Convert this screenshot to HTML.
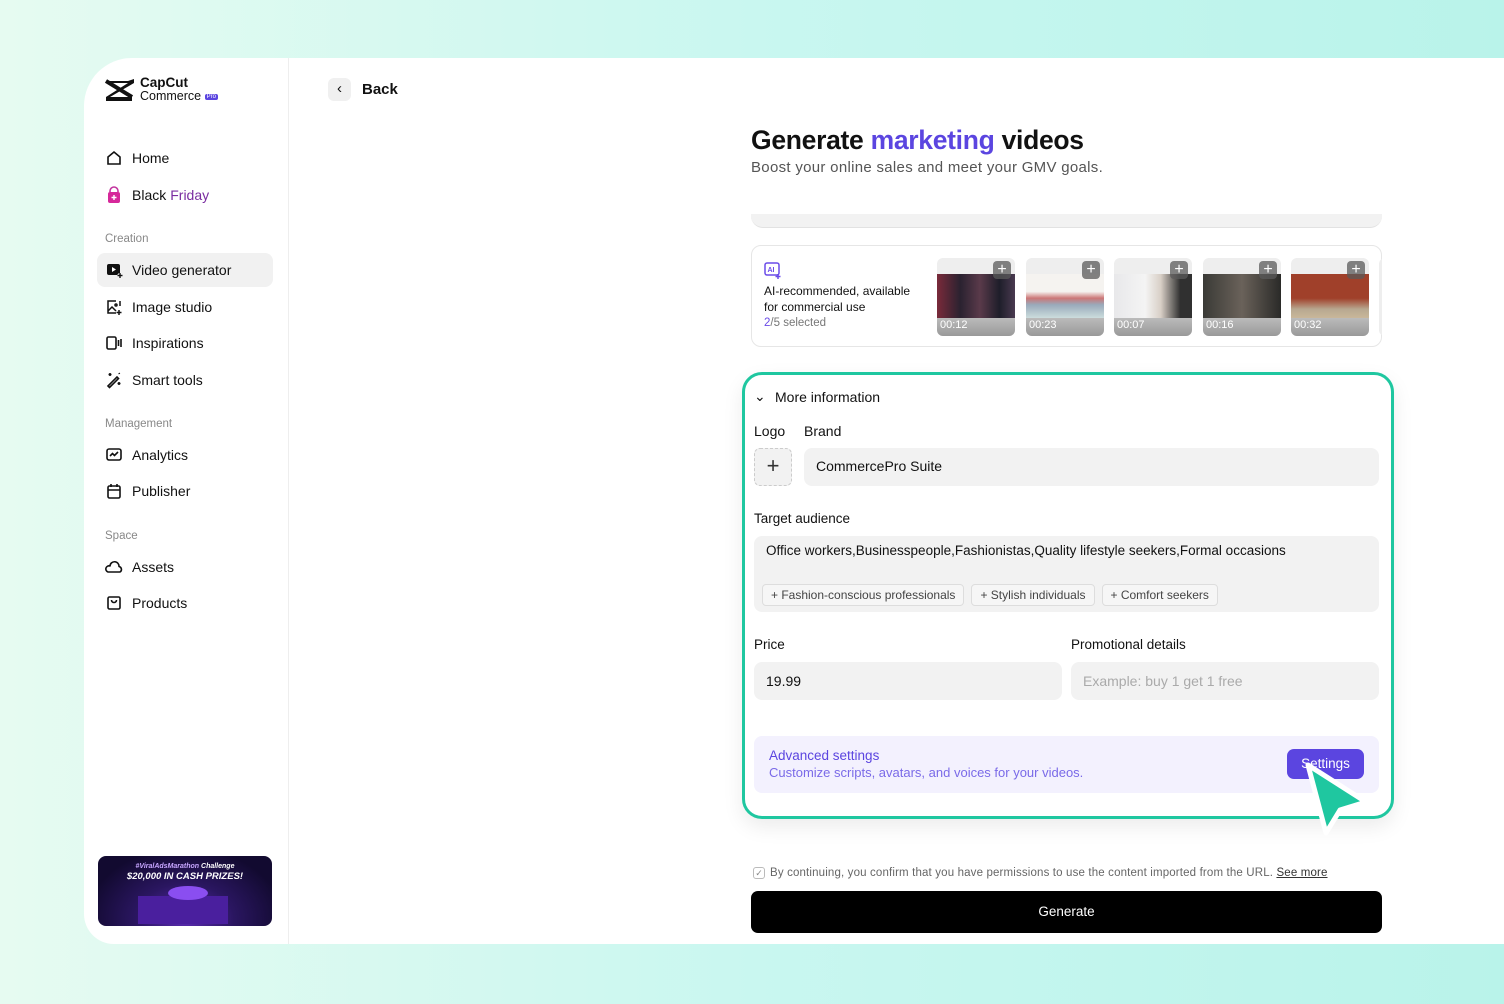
<!DOCTYPE html>
<html><head><meta charset="utf-8"><style>
*{box-sizing:border-box;margin:0;padding:0}
body{width:1504px;height:1004px;overflow:hidden;font-family:"Liberation Sans",sans-serif;background:linear-gradient(90deg,#e6fbf1 0%,#c9f7f0 50%,#b9f3ea 100%);position:relative;color:#111}
.a{position:absolute}
.card{left:84px;top:58px;width:1420px;height:886px;background:#fff;border-top-left-radius:48px;border-bottom-left-radius:30px;overflow:hidden}
.side{left:0;top:0;width:205px;height:886px;border-right:1px solid #eee}
.nav{position:absolute;left:21px;font-size:14px;color:#111;display:flex;align-items:center;gap:9px}
.nav svg{width:18px;height:18px}
.sec{position:absolute;left:21px;font-size:11.5px;color:#888}
.in{background:#f2f2f2;border-radius:8px;font-size:14px;color:#111}
.chip{display:inline-block;border:1px solid #ddd;border-radius:4px;background:#f6f6f6;font-size:12px;color:#444;padding:3px 8px;margin-right:7px}
.th{position:absolute;top:0;width:78px;height:78px;border-radius:6px;overflow:hidden;background:#eee}
.th .img{position:absolute;left:0;top:16px;width:78px;height:44px}
.th .bot{position:absolute;left:0;top:60px;width:78px;height:18px;background:linear-gradient(#bbb,#999);color:#fff;font-size:11px;padding:1px 3px}
.th .pl{position:absolute;right:4px;top:3px;width:18px;height:18px;border-radius:4px;background:rgba(90,90,90,.75);color:#fff;font-size:16px;line-height:17px;text-align:center}
</style></head><body>
<div class="a card">
 <div class="a side">
  <svg class="a" style="left:20px;top:20px" width="32" height="24" viewBox="0 0 32 24"><path d="M2 3h22l6-2v4L6 19h22v4H2v-4l22-14H2z" fill="#111"/><path d="M2 3l26 16" stroke="#111" stroke-width="4"/></svg>
  <div class="a" style="left:56px;top:18px;font-size:13.5px;font-weight:bold;line-height:14px">CapCut</div>
  <div class="a" style="left:56px;top:32px;font-size:12.5px;line-height:13px">Commerce <span style="background:#5b45e0;color:#fff;font-size:6px;padding:0 2px;border-radius:2px;vertical-align:2px">Pro</span></div>
  <div class="nav" style="top:91px"><svg viewBox="0 0 18 18" fill="none" stroke="#111" stroke-width="1.6"><path d="M3 8l6-5 6 5v7H3z"/></svg>Home</div>
  <div class="nav" style="top:128px"><svg viewBox="0 0 18 18"><path d="M5 6V5a4 4 0 018 0v1" stroke="#c2339e" stroke-width="1.6" fill="none"/><rect x="3" y="6" width="12" height="11" rx="2" fill="#d6289a"/><path d="M9 9v5M6.5 11.5h5" stroke="#fff" stroke-width="1.4"/></svg>Black <span style="color:#7a2ca0;margin-left:-5px">Friday</span></div>
  <div class="sec" style="top:175px">Creation</div>
  <div class="a" style="left:13px;top:195px;width:176px;height:34px;background:#f1f1f1;border-radius:8px"></div>
  <div class="nav" style="top:203px"><svg viewBox="0 0 18 18"><rect x="2" y="3" width="13" height="11" rx="2" fill="#111"/><path d="M7 6l4 2.5L7 11z" fill="#fff"/><path d="M15 12v5M12.5 14.5h5" stroke="#fff" stroke-width="3"/><path d="M15 12v5M12.5 14.5h5" stroke="#111" stroke-width="1.4"/></svg>Video generator</div>
  <div class="nav" style="top:240px"><svg viewBox="0 0 18 18" fill="none" stroke="#111" stroke-width="1.5"><path d="M11 3H3v12h8M15 3v5"/><path d="M3 13l4-4 4 4"/><circle cx="11" cy="7" r="1"/><path d="M14 12v5M11.5 14.5h5"/></svg>Image studio</div>
  <div class="nav" style="top:276px"><svg viewBox="0 0 18 18" fill="none" stroke="#111" stroke-width="1.6"><rect x="2" y="3" width="9" height="12" rx="1.5"/><path d="M13.5 6v6M16 5v8"/></svg>Inspirations</div>
  <div class="nav" style="top:313px"><svg viewBox="0 0 18 18" fill="none" stroke="#111" stroke-width="1.6"><path d="M3 15l9-9 1.5 1.5-9 9z"/><path d="M5 2v3M3.5 3.5h3M14 11v3M12.5 12.5h3M14 2l.5 1"/></svg>Smart tools</div>
  <div class="sec" style="top:360px">Management</div>
  <div class="nav" style="top:388px"><svg viewBox="0 0 18 18" fill="none" stroke="#111" stroke-width="1.6"><rect x="2" y="3" width="14" height="11" rx="2"/><path d="M5 10l2.5-2.5 2 2L13 6"/></svg>Analytics</div>
  <div class="nav" style="top:424px"><svg viewBox="0 0 18 18" fill="none" stroke="#111" stroke-width="1.6"><rect x="3" y="4" width="12" height="12" rx="1.5"/><path d="M3 8h12M6 2v3M12 2v3"/></svg>Publisher</div>
  <div class="sec" style="top:472px">Space</div>
  <div class="nav" style="top:500px"><svg viewBox="0 0 18 18" fill="none" stroke="#111" stroke-width="1.6"><path d="M3 14h12a3 3 0 00-1-5.5A4.5 4.5 0 005 8a3 3 0 00-2 6z" stroke-linejoin="round"/></svg>Assets</div>
  <div class="nav" style="top:536px"><svg viewBox="0 0 18 18" fill="none" stroke="#111" stroke-width="1.6"><rect x="3" y="3" width="12" height="12" rx="1.5"/><path d="M6.5 6a2.5 2.5 0 005 0"/></svg>Products</div>
  <div class="a" style="left:14px;top:798px;width:174px;height:70px;border-radius:8px;background:radial-gradient(ellipse at 50% 90%,#5b2bb3 0%,#2a1660 40%,#120a30 80%);color:#fff;text-align:center;overflow:hidden">
   <div style="font-size:7px;font-style:italic;font-weight:bold;margin-top:7px"><span style="color:#c7a6ff">#ViralAdsMarathon</span> Challenge</div>
   <div style="font-size:9.5px;font-style:italic;font-weight:bold;margin-top:1px">$20,000 IN CASH PRIZES!</div>
   <div style="position:absolute;left:40px;top:40px;width:90px;height:28px;background:#4a1f9e"></div>
   <div style="position:absolute;left:70px;top:30px;width:40px;height:14px;border-radius:50%;background:#8a4ef0"></div>
  </div>
 </div>
 <div class="a" style="left:244px;top:20px;width:23px;height:23px;background:#f0f0f0;border-radius:6px;text-align:center;font-size:15px;line-height:22px">&#8249;</div>
 <div class="a" style="left:278px;top:23px;font-size:15px;font-weight:bold">Back</div>
 <div class="a" style="left:667px;top:67px;font-size:26.5px;font-weight:bold;letter-spacing:-0.3px">Generate <span style="color:#5b45e0">marketing</span> videos</div>
 <div class="a" style="left:667px;top:101px;font-size:15px;color:#555;letter-spacing:0.3px">Boost your online sales and meet your GMV goals.</div>
 <div class="a" style="left:667px;top:156px;width:631px;height:14px;background:#f2f2f2;border-radius:0 0 12px 12px;border-bottom:1px solid #e2e2e2"></div>
 <div class="a" style="left:667px;top:187px;width:631px;height:102px;border:1px solid #e6e6e6;border-radius:10px">
  <svg class="a" style="left:12px;top:16px" width="18" height="18" viewBox="0 0 18 18" fill="none" stroke="#6a4be8" stroke-width="1.5"><rect x="1" y="1" width="14" height="12" rx="2"/><text x="3.5" y="10" font-size="7" fill="#6a4be8" stroke="none" font-family="Liberation Sans" font-weight="bold">AI</text><path d="M14 12v5M11.5 14.5h5"/></svg>
  <div class="a" style="left:12px;top:37px;font-size:12px;line-height:16px;width:158px">AI-recommended, available for commercial use</div>
  <div class="a" style="left:12px;top:71px;font-size:11.5px;color:#777"><span style="color:#6a4be8">2</span>/5 selected</div>
  <div class="a" style="left:185px;top:12px;width:445px;height:78px;overflow:hidden">
   <div class="th" style="left:0"><div class="img" style="background:linear-gradient(90deg,#7a2a3a,#2a2230 30%,#5a3a4a 55%,#1e1e2a 80%,#4a3a50)"></div><div class="bot">00:12</div><div class="pl">+</div></div>
   <div class="th" style="left:89px"><div class="img" style="background:linear-gradient(#f5f3f0 40%,#c77 55%,#9ab 70%,#cdd 100%)"></div><div class="bot">00:23</div><div class="pl">+</div></div>
   <div class="th" style="left:177px"><div class="img" style="background:linear-gradient(90deg,#e8e8ea,#f4f4f4 40%,#d8cfc6 60%,#303030 85%)"></div><div class="bot">00:07</div><div class="pl">+</div></div>
   <div class="th" style="left:266px"><div class="img" style="background:linear-gradient(90deg,#3a3a36,#6a625a 50%,#2a2a28)"></div><div class="bot">00:16</div><div class="pl">+</div></div>
   <div class="th" style="left:354px"><div class="img" style="background:linear-gradient(#a0402a 55%,#b8a890 80%,#c9b79a)"></div><div class="bot">00:32</div><div class="pl">+</div></div>
   <div class="th" style="left:442px"></div>
  </div>
 </div>
 <div class="a" style="left:658px;top:314px;width:652px;height:447px;border:3px solid #1fc7a0;border-radius:20px;background:#fff;box-shadow:0 8px 20px rgba(0,0,0,.08)">
  <div class="a" style="left:9px;top:13px;font-size:14px">&#8964;</div>
  <div class="a" style="left:30px;top:14px;font-size:14px">More information</div>
  <div class="a" style="left:9px;top:48px;font-size:14px">Logo</div>
  <div class="a" style="left:59px;top:48px;font-size:14px">Brand</div>
  <div class="a" style="left:9px;top:73px;width:38px;height:38px;border:1px dashed #ccc;border-radius:6px;background:#f2f2f2;text-align:center;font-size:22px;line-height:34px;color:#333">+</div>
  <div class="a in" style="left:59px;top:73px;width:575px;height:38px;padding:10px 12px">CommercePro Suite</div>
  <div class="a" style="left:9px;top:136px;font-size:13.5px">Target audience</div>
  <div class="a in" style="left:9px;top:161px;width:625px;height:76px;padding:7px 12px;font-size:13.5px">Office workers,Businesspeople,Fashionistas,Quality lifestyle seekers,Formal occasions
   <div style="position:absolute;left:8px;top:48px"><span class="chip">+ Fashion-conscious professionals</span><span class="chip">+ Stylish individuals</span><span class="chip">+ Comfort seekers</span></div></div>
  <div class="a" style="left:9px;top:262px;font-size:13.5px">Price</div>
  <div class="a" style="left:326px;top:262px;font-size:13.5px">Promotional details</div>
  <div class="a in" style="left:9px;top:287px;width:308px;height:38px;padding:11px 12px">19.99</div>
  <div class="a in" style="left:326px;top:287px;width:308px;height:38px;padding:11px 12px;color:#aaa">Example: buy 1 get 1 free</div>
  <div class="a" style="left:9px;top:361px;width:625px;height:57px;background:#f3f1fe;border-radius:8px">
   <div class="a" style="left:15px;top:12px;font-size:13.5px;color:#5b45e0">Advanced settings</div>
   <div class="a" style="left:15px;top:29px;font-size:13px;color:#7a6ae8">Customize scripts, avatars, and voices for your videos.</div>
   <div class="a" style="left:533px;top:13px;width:77px;height:30px;background:#5b45e0;border-radius:7px;color:#fff;font-size:13.5px;text-align:center;line-height:30px">Settings</div>
  </div>
  <svg class="a" style="left:555px;top:382px" width="76" height="80" viewBox="0 0 76 80"><path d="M8 8L66 45 40 53 26 76z" fill="#1fc7a0" stroke="#fff" stroke-width="5" stroke-linejoin="round"/></svg>
 </div>
 <div class="a" style="left:669px;top:809px;width:12px;height:12px;border:1px solid #bbb;border-radius:3px;font-size:9px;line-height:10px;text-align:center;color:#888">&#10003;</div>
 <div class="a" style="left:686px;top:809px;font-size:11.5px;color:#666;letter-spacing:0.15px">By continuing, you confirm that you have permissions to use the content imported from the URL. <span style="color:#333;text-decoration:underline">See more</span></div>
 <div class="a" style="left:667px;top:833px;width:631px;height:42px;background:#000;border-radius:7px;color:#fff;font-size:13.5px;text-align:center;line-height:42px">Generate</div>
</div>
</body></html>
